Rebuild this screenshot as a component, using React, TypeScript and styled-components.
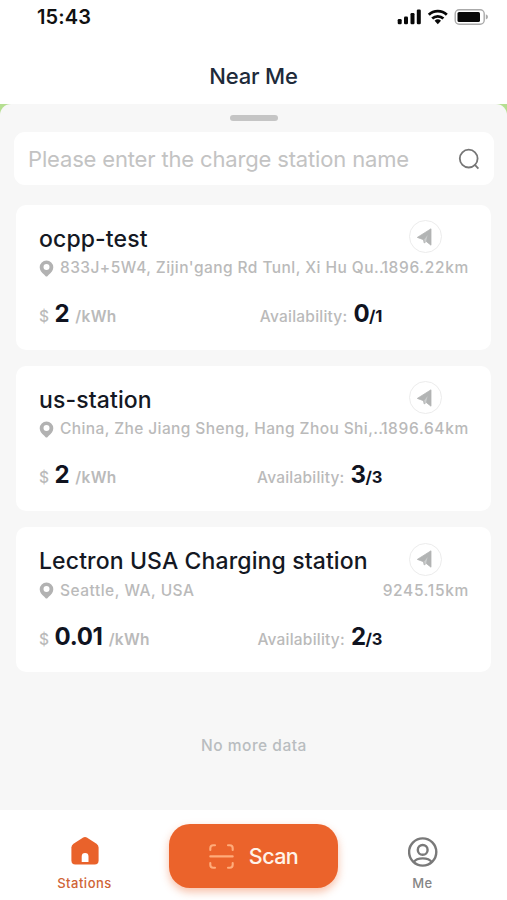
import React from "react";
import styled, { createGlobalStyle } from "styled-components";

const Global = createGlobalStyle`
  * { box-sizing: border-box; }
  body { margin: 0; background: #fff; font-family: Inter, "Liberation Sans", sans-serif; font-feature-settings: "calt" 0; }
  button { font-family: inherit; border: 0; padding: 0; background: none; }
  svg { display: block; flex: none; }
`;

const Screen = styled.div`
  width: 507px;
  height: 900px;
  display: flex;
  flex-direction: column;
  overflow: hidden;
  background: #fff;
`;

const StatusBar = styled.div`
  height: 34px;
  padding: 0 19px 0 37px;
  display: flex;
  align-items: center;
  justify-content: space-between;
`;

const Clock = styled.time`
  font-size: 20px;
  font-weight: 600;
  line-height: 34px;
  letter-spacing: 0.1px;
  color: #111;
`;

const Header = styled.header`
  height: 70px;
  padding-top: 27px;
  text-align: center;
`;

const HeaderTitle = styled.h1`
  margin: 0;
  font-size: 22px;
  line-height: 30px;
  font-weight: 500;
  letter-spacing: -0.15px;
  color: #202a3a;
`;

const MapStrip = styled.div`
  height: 706px;
  background: linear-gradient(#b5df91 0 14px, #fff 14px);
`;

const Sheet = styled.main`
  height: 100%;
  padding: 11px 13px 0 14px;
  background: #f7f7f7;
  border-radius: 11px 11px 0 0;
  display: flex;
  flex-direction: column;
`;

const Handle = styled.div`
  width: 48px;
  height: 6px;
  margin: 0 auto 11px;
  flex: none;
  border-radius: 3px;
  background: #c5c5c5;
`;

const SearchBox = styled.label`
  height: 53px;
  padding: 0 14px;
  flex: none;
  display: flex;
  align-items: center;
  justify-content: space-between;
  background: #fff;
  border-radius: 11px;
`;

const SearchHint = styled.span`
  font-size: 22px;
  line-height: 30px;
  letter-spacing: -0.16px;
  color: #c3c3c3;
`;

const CardList = styled.section`
  padding: 19.6px 3px 0 2px;
  display: flex;
  flex-direction: column;
  gap: 16.3px;
`;

const Card = styled.article`
  height: 145px;
  padding: 15px 22px 0 23px;
  background: #fff;
  border-radius: 10px;
`;

const CardTop = styled.div`
  height: 36.5px;
  display: flex;
  align-items: flex-start;
  justify-content: space-between;
`;

const StationName = styled.h2`
  margin: 0;
  font-size: 23px;
  line-height: 38px;
  font-weight: 500;
  letter-spacing: 0.12px;
  color: #141823;
  white-space: nowrap;
`;

const NavigateButton = styled.button`
  width: 33px;
  height: 33px;
  margin: 0.6px 27px 0 0;
  border: 1.5px solid #ececec;
  border-radius: 50%;
  display: flex;
  align-items: center;
  justify-content: center;
`;

const AddressRow = styled.div`
  height: 24px;
  display: flex;
  align-items: center;
  font-size: 15.5px;
  font-weight: 500;
  line-height: 24px;
  color: #bababa;
  white-space: nowrap;
`;

const Address = styled.span<{ $spacing: number }>`
  flex: 1 1 0;
  min-width: 0;
  margin-left: 6px;
  letter-spacing: ${(p) => p.$spacing}px;
`;

const Distance = styled.span`
  letter-spacing: 0.68px;
`;

const Stats = styled.div`
  height: 36px;
  margin-top: 16px;
  display: flex;
  align-items: baseline;
  line-height: 36px;
  white-space: nowrap;
  color: #bababa;
  font-size: 15.5px;
  font-weight: 500;
`;

const Price = styled.strong`
  margin: 0 6px 0 5.5px;
  font-size: 24px;
  font-weight: 700;
  letter-spacing: -0.3px;
  color: #10131f;
`;

const Unit = styled.span`
  font-weight: 600;
  letter-spacing: 0.3px;
`;

const Availability = styled.div`
  margin-left: auto;
  margin-right: 87px;
  letter-spacing: 0.22px;
`;

const Free = styled.strong`
  margin-left: 6px;
  font-size: 24px;
  letter-spacing: -0.5px;
  color: #10131f;
`;

const Total = styled.strong`
  font-size: 16.5px;
  letter-spacing: -0.3px;
  color: #10131f;
`;

const EndNote = styled.p`
  margin: 61.5px 0 0;
  text-align: center;
  font-size: 15.5px;
  line-height: 24px;
  font-weight: 500;
  letter-spacing: 0.5px;
  color: #b9bdc0;
`;

const BottomNav = styled.nav`
  height: 90px;
  display: grid;
  grid-template-columns: 169px 169px 169px;
  background: #fff;
`;

const NavItem = styled.a<{ $active?: boolean }>`
  height: 83px;
  padding-top: ${(p) => (p.$active ? 26 : 27)}px;
  display: flex;
  flex-direction: column;
  align-items: center;
  justify-content: space-between;
  font-size: 13px;
  line-height: 20px;
  font-weight: 500;
  letter-spacing: 0.5px;
  color: ${(p) => (p.$active ? "#cf6436" : "#858585")};
`;

const ScanButton = styled.button`
  width: 169px;
  height: 64px;
  margin: 14px 0 0;
  display: flex;
  align-items: center;
  justify-content: center;
  gap: 15px;
  border-radius: 21px;
  background: #eb632b;
  box-shadow: 0 4px 9px rgba(235, 99, 43, 0.4);
  color: #fff3e9;
  font-size: 21.5px;
  font-weight: 500;
  letter-spacing: -0.6px;
`;

const StatusIcons = () => (
  <svg width="92" height="20" viewBox="396 7 92 20">
    <g fill="#080808">
      <rect x="397.7" y="19" width="4" height="5.2" rx="1.2" />
      <rect x="404" y="16.5" width="4" height="7.7" rx="1.2" />
      <rect x="410.5" y="13" width="4" height="11.2" rx="1.2" />
      <rect x="416.8" y="9.5" width="4" height="14.7" rx="1.2" />
      <path d="M437.8 24.2l-3.2-3.4a4.7 4.7 0 0 1 6.4 0z" />
      <rect x="457.5" y="12" width="22.5" height="10" rx="1.6" />
    </g>
    <path d="M428.8 14.8a13 13 0 0 1 18 0M432.2 18.5a8.3 8.3 0 0 1 11.2 0" fill="none" stroke="#080808" strokeWidth="2.8" />
    <rect x="455.2" y="9.8" width="29" height="14.4" rx="4" fill="none" stroke="#aaa" strokeWidth="1.4" />
    <path d="M485.8 14.3q2.2.7 2.2 2.6t-2.2 2.6z" fill="#aaa" />
  </svg>
);

const SearchIcon = () => (
  <svg width="22" height="22" viewBox="0 0 22 22" fill="none" stroke="#767676" strokeWidth="1.8">
    <circle cx="10.7" cy="10.6" r="8.9" />
    <path d="M16.4 16.4l4 4.2" />
  </svg>
);

const PlaneIcon = () => (
  <svg width="18" height="20" viewBox="0 0 18 20">
    <path d="M.3 10.4L14 1.8v16.4L9.2 14.4l-2 1.6-.7-3.3z" fill="#b2b4b4" stroke="#b2b4b4" strokeWidth=".8" strokeLinejoin="round" />
    <path d="M7.3 12.6L10.6 8 9.1 14.2l-1.5 1.2z" fill="#cccece" />
  </svg>
);

const PinIcon = () => (
  <svg width="15" height="17" viewBox="0 0 15 17">
    <path d="M7.5.5A6.8 6.8 0 0 0 .7 7.2c0 3 1.7 5.2 4.6 7.6l1.3 1.4q.9.7 1.8 0l1.3-1.4c2.9-2.4 4.6-4.6 4.6-7.6A6.8 6.8 0 0 0 7.5.5zm0 3.6a3 3 0 1 1 0 6 3 3 0 0 1 0-6z" fill="#b2b2b2" fillRule="evenodd" />
  </svg>
);

const HouseIcon = () => (
  <svg width="28" height="30" viewBox="0 0 28 30">
    <path d="M11.8 1.8q2.2-1.4 4.4 0l9.3 6q2.1 1.4 2.1 3.8v12.9q0 4-4 4H4.4q-4 0-4-4V11.6q0-2.4 2.1-3.8z" fill="#e9622b" />
    <path d="M10.7 26v-5.5a3.4 3.4 0 0 1 6.8 0V26z" fill="#fff" />
  </svg>
);

const ScanIcon = () => (
  <svg width="25" height="25" viewBox="0 0 25 25" fill="none" stroke="#ffac7b" strokeWidth="2.1" strokeLinecap="round">
    <path d="M1.3 6V4.2Q1.3 1.3 4.2 1.3H6M19 1.3h1.8q2.9 0 2.9 2.9V6M1.3 19v1.8q0 2.9 2.9 2.9H6M19 23.7h1.8q2.9 0 2.9-2.9V19M1.3 12.4h22.4" />
  </svg>
);

const UserIcon = () => (
  <svg width="30" height="30" viewBox="0 0 30 30" fill="none" stroke="#797979" strokeWidth="2.4">
    <circle cx="14.7" cy="15" r="13.6" />
    <circle cx="14.7" cy="12.9" r="4.9" />
    <path d="M5.7 25.2c3.3-5.1 14.7-5.1 18 0" />
  </svg>
);

const stations = [
  { name: "ocpp-test", address: "833J+5W4, Zijin'gang Rd Tunl, Xi Hu Qu...", spacing: 0.44, distance: "1896.22km", price: "2", free: "0", total: "1" },
  { name: "us-station", address: "China, Zhe Jiang Sheng, Hang Zhou Shi,...", spacing: 0.4, distance: "1896.64km", price: "2", free: "3", total: "3" },
  { name: "Lectron USA Charging station", address: "Seattle, WA, USA", spacing: 0.5, distance: "9245.15km", price: "0.01", free: "2", total: "3" },
];

export default function App() {
  return (
    <Screen>
      <Global />
      <StatusBar>
        <Clock>15:43</Clock>
        <StatusIcons />
      </StatusBar>
      <Header>
        <HeaderTitle>Near Me</HeaderTitle>
      </Header>
      <MapStrip>
        <Sheet>
          <Handle />
          <SearchBox>
            <SearchHint>Please enter the charge station name</SearchHint>
            <SearchIcon />
          </SearchBox>
          <CardList>
            {stations.map((s) => (
              <Card key={s.name}>
                <CardTop>
                  <StationName>{s.name}</StationName>
                  <NavigateButton aria-label="Navigate">
                    <PlaneIcon />
                  </NavigateButton>
                </CardTop>
                <AddressRow>
                  <PinIcon />
                  <Address $spacing={s.spacing}>{s.address}</Address>
                  <Distance>{s.distance}</Distance>
                </AddressRow>
                <Stats>
                  <span>$</span>
                  <Price>{s.price}</Price>
                  <Unit>/kWh</Unit>
                  <Availability>
                    Availability:
                    <Free>{s.free}</Free>
                    <Total>/{s.total}</Total>
                  </Availability>
                </Stats>
              </Card>
            ))}
          </CardList>
          <EndNote>No more data</EndNote>
        </Sheet>
      </MapStrip>
      <BottomNav>
        <NavItem $active>
          <HouseIcon />
          Stations
        </NavItem>
        <ScanButton>
          <ScanIcon />
          Scan
        </ScanButton>
        <NavItem>
          <UserIcon />
          Me
        </NavItem>
      </BottomNav>
    </Screen>
  );
}
